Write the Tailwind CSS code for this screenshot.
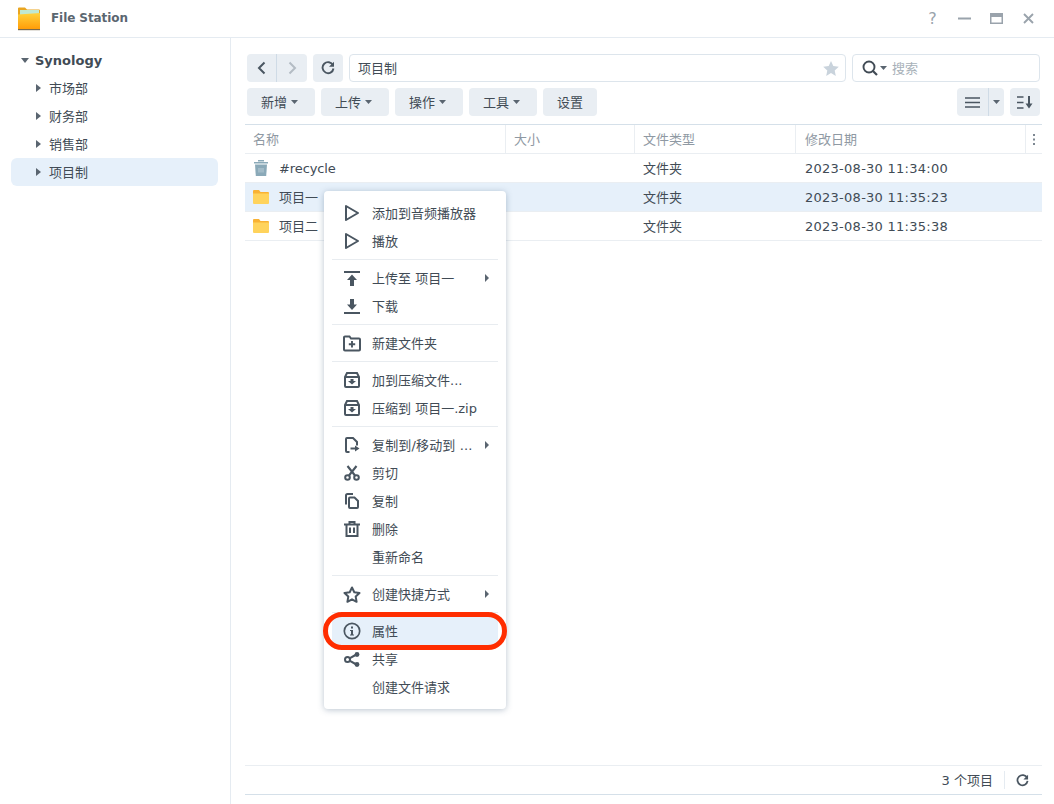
<!DOCTYPE html>
<html lang="zh-CN">
<head>
  <meta charset="UTF-8" />
  <title>File Station</title>
  <script src="https://cdn.jsdelivr.net/npm/@tailwindcss/browser@4"></script>
</head>
<body class="w-[1054px] h-[804px] overflow-hidden bg-white text-[13px] leading-[21px] text-[#414b55] font-['DejaVu_Sans','Noto_Sans_CJK_SC',sans-serif]">
  <div class="relative w-full h-full flex flex-col">
    <!-- Title bar -->
    <header class="h-[38px] shrink-0 flex items-center border-b border-[#e5ebf1] pl-[17px] pr-[19px]">
      <svg width="25" height="25" viewBox="0 0 25 25">
        <defs><linearGradient id="fold" x1="0" y1="0" x2="0" y2="1"><stop offset="0" stop-color="#ffd23c"/><stop offset="1" stop-color="#ff9a05"/></linearGradient></defs>
        <path d="M1 2.5a1 1 0 0 1 1-1h6l2 2h12a1 1 0 0 1 1 1V9H1z" fill="#e9a520"/>
        <rect x="3" y="4" width="19" height="6" fill="#bfe8d2"/>
        <path d="M1 8.5l22-1.5v15.5a1.5 1.5 0 0 1-1.5 1.5h-19A1.5 1.5 0 0 1 1 22.5z" fill="url(#fold)"/>
        <rect x="1" y="23" width="22" height="1.2" fill="#7b6a4a"/>
      </svg>
      <span class="ml-[9px] text-[12px] tracking-[-0.08px] font-bold text-[#5b6670]">File Station</span>
      <div class="ml-auto flex items-center gap-[19px] text-[#9aa3ac]">
        <span class="w-[13px] text-center text-[16px] leading-none">?</span>
        <svg width="13" height="13" viewBox="0 0 13 13"><rect y="5.5" width="13" height="2" fill="#9aa3ac"/></svg>
        <svg width="13" height="13" viewBox="0 0 13 13"><rect x=".75" y="1.75" width="11.5" height="9.5" fill="none" stroke="#9aa3ac" stroke-width="1.5"/><rect x="1" y="2" width="11" height="3" fill="#9aa3ac"/></svg>
        <svg width="13" height="13" viewBox="0 0 13 13"><path d="M2 2l9 9M11 2l-9 9" stroke="#9aa3ac" stroke-width="1.9"/></svg>
      </div>
    </header>

    <div class="flex-1 flex min-h-0">
      <!-- Sidebar -->
      <aside class="w-[231px] shrink-0 border-r border-[#e5ebf1] pt-[8px] pl-[11px] pr-[12px]">
        <div class="h-[28px] flex items-center pl-[10px] gap-[6px] text-[13px] font-bold text-[#414b55]">
          <svg width="8" height="5" viewBox="0 0 8 5"><path d="M0 0h8L4 5z" fill="#5a6570"/></svg>Synology
        </div>
        <div class="h-[28px] flex items-center pl-[25px] gap-[8px]"><svg width="5" height="8" viewBox="0 0 5 8"><path d="M0 0v8l5-4z" fill="#5a6570"/></svg>市场部</div>
        <div class="h-[28px] flex items-center pl-[25px] gap-[8px]"><svg width="5" height="8" viewBox="0 0 5 8"><path d="M0 0v8l5-4z" fill="#5a6570"/></svg>财务部</div>
        <div class="h-[28px] flex items-center pl-[25px] gap-[8px]"><svg width="5" height="8" viewBox="0 0 5 8"><path d="M0 0v8l5-4z" fill="#5a6570"/></svg>销售部</div>
        <div class="h-[28px] flex items-center pl-[25px] gap-[8px] rounded-md bg-[#e6f0fa]"><svg width="5" height="8" viewBox="0 0 5 8"><path d="M0 0v8l5-4z" fill="#5a6570"/></svg>项目制</div>
      </aside>

      <!-- Main -->
      <main class="flex-1 min-w-0 flex flex-col pl-[14px] pr-[12px] pb-[9px]">
        <div class="pt-[16px] pl-[2px] pr-[2px]">
          <div class="flex gap-[6px] h-[28px]">
            <div class="w-[60px] flex rounded bg-[#e9eef3]">
              <div class="w-[30px] border-r border-[#cfdbe6] flex items-center justify-center">
                <svg width="9" height="14" viewBox="0 0 9 14"><path d="M7.500 1.500L2 7l5.500 5.500" fill="none" stroke="#4a5661" stroke-width="2"/></svg>
              </div>
              <div class="flex-1 flex items-center justify-center">
                <svg width="9" height="14" viewBox="0 0 9 14"><path d="M1.500 1.500L7 7l-5.500 5.500" fill="none" stroke="#b4bcc4" stroke-width="2"/></svg>
              </div>
            </div>
            <div class="w-[30px] rounded bg-[#e9eef3] flex items-center justify-center">
              <svg width="14" height="14" viewBox="0 0 14 14"><path d="M12 4.200A5.500 5.500 0 1 0 12.500 7.500" fill="none" stroke="#4a5661" stroke-width="1.900"/><path d="M13 0.800v5h-5z" fill="#4a5661"/></svg>
            </div>
            <div class="w-[497px] rounded border border-[#dde5ec] flex items-center pl-[8px] pr-[6px]">
              项目制
              <svg class="ml-auto" width="16" height="15" viewBox="0 0 16 15"><path d="M8 0l2.300 5.100 5.500.6-4.100 3.700 1.100 5.500L8 12.100l-4.800 2.800 1.100-5.500L.2 5.700l5.500-.6z" fill="#c9d3dc"/></svg>
            </div>
            <div class="flex-1 rounded border border-[#dde5ec] flex items-center pl-[9px] text-[#a8b1b9]">
              <svg width="16" height="16" viewBox="0 0 16 16"><circle cx="7" cy="7" r="5.500" fill="none" stroke="#414b55" stroke-width="1.900"/><path d="M10.500 10.500l4.500 4.500" stroke="#414b55" stroke-width="2.200"/></svg>
              <svg class="ml-[2px] mr-[5px]" width="7" height="4" viewBox="0 0 7 4"><path d="M0 0h7L3.500 4z" fill="#5a6570"/></svg>
              搜索
            </div>
          </div>
          <div class="flex gap-[6px] h-[28px] mt-[6px]">
            <button class="w-[68px] rounded bg-[#e9eef3] flex items-center justify-center gap-[4px] pr-[3px]">新增<svg width="7" height="4" viewBox="0 0 7 4"><path d="M0 0h7L3.500 4z" fill="#5a6570"/></svg></button>
            <button class="w-[68px] rounded bg-[#e9eef3] flex items-center justify-center gap-[4px] pr-[3px]">上传<svg width="7" height="4" viewBox="0 0 7 4"><path d="M0 0h7L3.500 4z" fill="#5a6570"/></svg></button>
            <button class="w-[68px] rounded bg-[#e9eef3] flex items-center justify-center gap-[4px] pr-[3px]">操作<svg width="7" height="4" viewBox="0 0 7 4"><path d="M0 0h7L3.500 4z" fill="#5a6570"/></svg></button>
            <button class="w-[68px] rounded bg-[#e9eef3] flex items-center justify-center gap-[4px] pr-[3px]">工具<svg width="7" height="4" viewBox="0 0 7 4"><path d="M0 0h7L3.500 4z" fill="#5a6570"/></svg></button>
            <button class="w-[54px] rounded bg-[#e9eef3]">设置</button>
            <div class="ml-auto w-[47px] rounded bg-[#e9eef3] flex">
              <div class="w-[32px] border-r border-[#cfdbe6] flex items-center justify-center">
                <svg width="15" height="11" viewBox="0 0 15 11"><path d="M0 1h15M0 5.500h15M0 10h15" stroke="#4a5661" stroke-width="1.600"/></svg>
              </div>
              <div class="flex-1 flex items-center justify-center"><svg width="7" height="4" viewBox="0 0 7 4"><path d="M0 0h7L3.500 4z" fill="#5a6570"/></svg></div>
            </div>
            <div class="w-[30px] rounded bg-[#e9eef3] flex items-center justify-center">
              <svg width="16" height="13" viewBox="0 0 16 13"><path d="M0 1h6.500M0 6.500h6.500M0 12h6.500" stroke="#4a5661" stroke-width="1.600"/><path d="M12 0v8" stroke="#4a5661" stroke-width="2"/><path d="M8.500 7.500h7L12 12.500z" fill="#4a5661"/></svg>
            </div>
          </div>
        </div>

        <!-- File table -->
        <div class="mt-[8px] border-t border-[#d5e0e9]">
          <div class="h-[29px] grid grid-cols-[261px_129px_161px_230px_1fr] border-b border-[#eaeef2] text-[#8f99a3]">
            <div class="pl-[8px] flex items-center border-r border-[#eaeef2]">名称</div>
            <div class="pl-[8px] flex items-center border-r border-[#eaeef2]">大小</div>
            <div class="pl-[8px] flex items-center border-r border-[#eaeef2]">文件类型</div>
            <div class="pl-[9px] flex items-center border-r border-[#eaeef2]">修改日期</div>
            <div class="w-[16px] flex items-center pl-[7px]"><svg width="3" height="11" viewBox="0 0 3 11"><path d="M0 0h2v2H0zM0 4.500h2v2H0zM0 9h2v2H0z" fill="#7d8791"/></svg></div>
          </div>
          <div class="h-[29px] grid grid-cols-[261px_129px_161px_230px_1fr] items-center border-b border-[#eaeef2]">
            <div class="flex items-center pl-[8px] gap-[10px]">
              <svg width="16" height="16" viewBox="0 0 16 16"><rect x="5" y="0" width="6" height="1.500" fill="#8aa9b8"/><rect x="1" y="2" width="14" height="1.500" fill="#8aa9b8"/><path d="M2 4.500h12l-.8 11.500H2.800z" fill="#8aa9b8"/><path d="M6 8v4.500M8 8v4.500M10 8v4.500" stroke="#c5d6de" stroke-width=".8"/></svg>
              <span class="tracking-[-0.1px]">#recycle</span>
            </div>
            <div></div>
            <div class="pl-[8px]">文件夹</div>
            <div class="pl-[9px] tracking-[0.26px]">2023-08-30 11:34:00</div>
          </div>
          <div class="h-[29px] grid grid-cols-[261px_129px_161px_230px_1fr] items-center border-b border-[#eaeef2] bg-[#e6f0fa]">
            <div class="flex items-center pl-[8px] gap-[10px]">
              <svg width="16" height="14" viewBox="0 0 16 14"><path d="M0 1a1 1 0 0 1 1-1h5l1.500 2H15a1 1 0 0 1 1 1v2H0z" fill="#f9b234"/><path d="M0 3.500h16V13a1 1 0 0 1-1 1H1a1 1 0 0 1-1-1z" fill="#ffd35c"/></svg>
              <span>项目一</span>
            </div>
            <div></div>
            <div class="pl-[8px]">文件夹</div>
            <div class="pl-[9px] tracking-[0.26px]">2023-08-30 11:35:23</div>
          </div>
          <div class="h-[29px] grid grid-cols-[261px_129px_161px_230px_1fr] items-center border-b border-[#eaeef2]">
            <div class="flex items-center pl-[8px] gap-[10px]">
              <svg width="16" height="14" viewBox="0 0 16 14"><path d="M0 1a1 1 0 0 1 1-1h5l1.500 2H15a1 1 0 0 1 1 1v2H0z" fill="#f9b234"/><path d="M0 3.500h16V13a1 1 0 0 1-1 1H1a1 1 0 0 1-1-1z" fill="#ffd35c"/></svg>
              <span>项目二</span>
            </div>
            <div></div>
            <div class="pl-[8px]">文件夹</div>
            <div class="pl-[9px] tracking-[0.26px]">2023-08-30 11:35:38</div>
          </div>
        </div>

        <!-- Footer -->
        <div class="mt-auto h-[29px] border-t border-[#eaeef2] flex items-center justify-end">
          <span class="pr-[11px]">3 个项目</span>
          <div class="h-[18px] border-l border-[#e5ebf1] pl-[11px] pr-[13px] flex items-center">
            <svg width="13" height="13" viewBox="0 0 14 14"><path d="M12 4.200A5.500 5.500 0 1 0 12.500 7.500" fill="none" stroke="#4a5661" stroke-width="1.900"/><path d="M13 0.800v5h-5z" fill="#4a5661"/></svg>
          </div>
        </div>
        <div class="border-t border-[#d5e0e9]"></div>
      </main>
    </div>

    <!-- Context menu -->
    <div class="absolute left-[324px] top-[191px] w-[182px] h-[518px] rounded bg-white py-[8px] shadow-[0_1px_6px_rgba(60,90,120,0.35)]">
      <div class="h-[28px] mx-[8px] flex items-center">
        <svg class="ml-[12px]" width="16" height="18" viewBox="0 0 16 18"><path d="M2 2l12 7-12 7z" fill="none" stroke="#4a5661" stroke-width="2" stroke-linejoin="round"/></svg>
        <span class="ml-[12px]">添加到音频播放器</span>
      </div>
      <div class="h-[28px] mx-[8px] flex items-center">
        <svg class="ml-[12px]" width="16" height="18" viewBox="0 0 16 18"><path d="M2 2l12 7-12 7z" fill="none" stroke="#4a5661" stroke-width="2" stroke-linejoin="round"/></svg>
        <span class="ml-[12px]">播放</span>
      </div>
      <div class="h-[9px] mx-[8px] flex items-center"><div class="w-full border-t border-[#e8ecf0]"></div></div>
      <div class="h-[28px] mx-[8px] flex items-center">
        <svg class="ml-[12px]" width="16" height="15" viewBox="0 0 16 15"><path d="M0 1h16" stroke="#4a5661" stroke-width="2"/><path d="M8 3.500l5 5.500H10v6H6V9H3z" fill="#4a5661"/></svg>
        <span class="ml-[12px]">上传至 项目一</span>
        <svg class="ml-auto mr-[9px]" width="4" height="8" viewBox="0 0 4 8"><path d="M0 0v8l4-4z" fill="#5a6570"/></svg>
      </div>
      <div class="h-[28px] mx-[8px] flex items-center">
        <svg class="ml-[12px]" width="16" height="15" viewBox="0 0 16 15"><path d="M6 0h4v5.500h3L8 11 3 5.500h3z" fill="#4a5661"/><path d="M0 14h16" stroke="#4a5661" stroke-width="2"/></svg>
        <span class="ml-[12px]">下载</span>
      </div>
      <div class="h-[9px] mx-[8px] flex items-center"><div class="w-full border-t border-[#e8ecf0]"></div></div>
      <div class="h-[28px] mx-[8px] flex items-center">
        <svg class="ml-[11px]" width="18" height="17" viewBox="0 0 18 17"><path d="M1 2.500a1 1 0 0 1 1-1h4.500l1.500 2h8a1 1 0 0 1 1 1v10a1 1 0 0 1-1 1H2a1 1 0 0 1-1-1z" fill="none" stroke="#4a5661" stroke-width="2"/><path d="M9 6v6.500M5.800 9.200h6.400" stroke="#4a5661" stroke-width="1.900"/></svg>
        <span class="ml-[11px]">新建文件夹</span>
      </div>
      <div class="h-[9px] mx-[8px] flex items-center"><div class="w-full border-t border-[#e8ecf0]"></div></div>
      <div class="h-[28px] mx-[8px] flex items-center">
        <svg class="ml-[12px]" width="16" height="16" viewBox="0 0 16 16"><path d="M3 1h10l2 4v9a1 1 0 0 1-1 1H2a1 1 0 0 1-1-1V5z" fill="none" stroke="#4a5661" stroke-width="2"/><path d="M1 5h14" stroke="#4a5661" stroke-width="2"/><path d="M6.500 7h3v2H12l-4 3.500L4 9h2.500z" fill="#4a5661"/></svg>
        <span class="ml-[12px]">加到压缩文件...</span>
      </div>
      <div class="h-[28px] mx-[8px] flex items-center">
        <svg class="ml-[12px]" width="16" height="16" viewBox="0 0 16 16"><path d="M3 1h10l2 4v9a1 1 0 0 1-1 1H2a1 1 0 0 1-1-1V5z" fill="none" stroke="#4a5661" stroke-width="2"/><path d="M1 5h14" stroke="#4a5661" stroke-width="2"/><path d="M6.500 7h3v2H12l-4 3.500L4 9h2.500z" fill="#4a5661"/></svg>
        <span class="ml-[12px]">压缩到 项目一.zip</span>
      </div>
      <div class="h-[9px] mx-[8px] flex items-center"><div class="w-full border-t border-[#e8ecf0]"></div></div>
      <div class="h-[28px] mx-[8px] flex items-center">
        <svg class="ml-[12px]" width="16" height="16" viewBox="0 0 16 16"><path d="M5.500 15H3a1 1 0 0 1-1-1V2a1 1 0 0 1 1-1h6l4 4v3.500" fill="none" stroke="#4a5661" stroke-width="2"/><path d="M6.500 11.500h5" stroke="#4a5661" stroke-width="2"/><path d="M11 8.500l4.500 3-4.500 3z" fill="#4a5661"/></svg>
        <span class="ml-[12px] whitespace-nowrap tracking-[0.15px]">复制到/移动到 ...</span>
        <svg class="ml-auto mr-[9px]" width="4" height="8" viewBox="0 0 4 8"><path d="M0 0v8l4-4z" fill="#5a6570"/></svg>
      </div>
      <div class="h-[28px] mx-[8px] flex items-center">
        <svg class="ml-[12px]" width="16" height="16" viewBox="0 0 16 16"><circle cx="3.500" cy="12.500" r="2.300" fill="none" stroke="#4a5661" stroke-width="2"/><circle cx="12.500" cy="12.500" r="2.300" fill="none" stroke="#4a5661" stroke-width="2"/><path d="M5 10.500L12.500 1M11 10.500L3.500 1" stroke="#4a5661" stroke-width="2.100"/></svg>
        <span class="ml-[12px]">剪切</span>
      </div>
      <div class="h-[28px] mx-[8px] flex items-center">
        <svg class="ml-[12px]" width="16" height="16" viewBox="0 0 16 16"><path d="M2 11.500V2.500a1.500 1.500 0 0 1 1.500-1.500H9" fill="none" stroke="#4a5661" stroke-width="2"/><path d="M5 5.500a1 1 0 0 1 1-1h4.500L14 8v6a1 1 0 0 1-1 1H6a1 1 0 0 1-1-1z" fill="none" stroke="#4a5661" stroke-width="2"/></svg>
        <span class="ml-[12px]">复制</span>
      </div>
      <div class="h-[28px] mx-[8px] flex items-center">
        <svg class="ml-[12px]" width="16" height="16" viewBox="0 0 16 16"><path d="M5.500 3V1h5v2M0 3.500h16" fill="none" stroke="#4a5661" stroke-width="2"/><path d="M2.500 3.500V15h11V3.500" fill="none" stroke="#4a5661" stroke-width="2"/><path d="M6 6.500v5.500M10 6.500v5.500" stroke="#4a5661" stroke-width="2"/></svg>
        <span class="ml-[12px]">删除</span>
      </div>
      <div class="h-[28px] mx-[8px] flex items-center pl-[40px]">重新命名</div>
      <div class="h-[9px] mx-[8px] flex items-center"><div class="w-full border-t border-[#e8ecf0]"></div></div>
      <div class="h-[28px] mx-[8px] flex items-center">
        <svg class="ml-[11px]" width="18" height="17" viewBox="0 0 18 17"><path d="M9 1.500l2.300 4.800 5.200.7-3.800 3.600.9 5.200L9 13.300l-4.600 2.500.9-5.200L1.500 7l5.200-.7z" fill="none" stroke="#4a5661" stroke-width="2" stroke-linejoin="round"/></svg>
        <span class="ml-[11px]">创建快捷方式</span>
        <svg class="ml-auto mr-[9px]" width="4" height="8" viewBox="0 0 4 8"><path d="M0 0v8l4-4z" fill="#5a6570"/></svg>
      </div>
      <div class="h-[9px] mx-[8px] flex items-center"><div class="w-full border-t border-[#e8ecf0]"></div></div>
      <div class="h-[28px] mx-[8px] flex items-center bg-[#e6f0fa]">
        <svg class="ml-[11px]" width="18" height="18" viewBox="0 0 18 18"><circle cx="9" cy="9" r="7.700" fill="none" stroke="#4a5661" stroke-width="1.700"/><rect x="8" y="4.500" width="2" height="2" fill="#4a5661"/><path d="M7 8h3v4.500h1v1H7v-1h1V9H7z" fill="#4a5661"/></svg>
        <span class="ml-[11px]">属性</span>
      </div>
      <div class="h-[28px] mx-[8px] flex items-center">
        <svg class="ml-[12px]" width="16" height="15" viewBox="0 0 16 15"><circle cx="3.500" cy="7.500" r="2.500" fill="none" stroke="#4a5661" stroke-width="2"/><circle cx="13" cy="2.500" r="2.400" fill="#4a5661"/><circle cx="13" cy="12.500" r="2.400" fill="#4a5661"/><path d="M5.500 6.300l6-3.300M5.500 8.700l6 3.300" stroke="#4a5661" stroke-width="2"/></svg>
        <span class="ml-[12px]">共享</span>
      </div>
      <div class="h-[28px] mx-[8px] flex items-center pl-[40px]">创建文件请求</div>
    </div>

    <!-- Red highlight ring -->
    <div class="absolute left-[323px] top-[612px] w-[184px] h-[38px] rounded-[19px] border-[5px] border-[#ff2d00]"></div>
  </div>
</body>
</html>
